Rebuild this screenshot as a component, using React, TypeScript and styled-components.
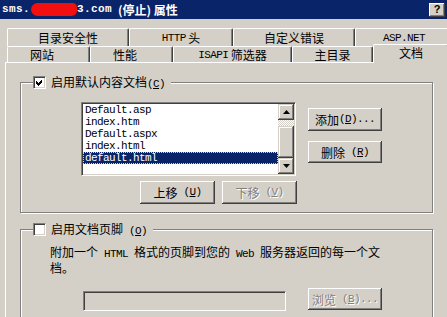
import styled, { createGlobalStyle } from 'styled-components';

const GlobalStyle = createGlobalStyle`
  html, body {
    margin: 0;
    padding: 0;
    background: #d4d0c8;
  }
  body {
    font-family: "Noto Sans CJK SC", "Noto Sans", sans-serif;
    font-size: 12px;
    color: #000;
  }
  * {
    box-sizing: border-box;
  }
`;

const Window = styled.div`
  width: 447px;
  height: 317px;
  overflow: hidden;
  display: flex;
  flex-direction: column;
  background: #d4d0c8;
`;

const TitleBar = styled.div`
  flex: 0 0 19px;
  display: flex;
  align-items: center;
  justify-content: space-between;
  padding: 0 2px;
  background: #0a246a;
  color: #fff;
  font-weight: bold;
  font-size: 12px;
  line-height: 19px;
  white-space: nowrap;
`;

const TitleText = styled.div`
  display: flex;
  align-items: center;
`;

const TitleMono = styled.span`
  font-family: "Liberation Mono", monospace;
  font-size: 11px;
  font-weight: bold;
  letter-spacing: 0.4px;
`;

const TitleState = styled.span`
  margin-left: 6px;
`;

const Redaction = styled.span`
  display: inline-block;
  width: 46px;
  height: 13px;
  margin-left: 1px;
  background: #f20f0f;
  border-radius: 7px 5px 6px 7px;
`;

const HelpButton = styled.span`
  width: 16px;
  height: 14px;
  display: flex;
  align-items: center;
  justify-content: center;
  background: #d4d0c8;
  color: #000;
  font-family: "Liberation Sans", sans-serif;
  font-weight: bold;
  font-size: 11px;
  box-shadow: inset -1px -1px #404040, inset 1px 1px #fff, inset -2px -2px #808080;
`;

const Body = styled.div`
  flex: 1;
  min-height: 0;
  display: flex;
  flex-direction: column;
  padding: 9px 0 0 5px;
`;

const TabRow = styled.div<{ $h: number }>`
  display: flex;
  align-items: flex-start;
  height: ${p => p.$h}px;
  padding-left: 2px;
  flex-shrink: 0;
`;

const Tab = styled.div<{ $w: number; $h: number; $active?: boolean; $shift?: number }>`
  flex: 0 0 ${p => p.$w}px;
  height: ${p => (p.$active ? p.$h + 3 : p.$h)}px;
  margin-top: ${p => (p.$active ? -2 : 0)}px;
  padding: 0 ${p => p.$shift ?? 0}px ${p => (p.$active ? 2 : 0)}px 0;
  position: ${p => (p.$active ? 'relative' : 'static')};
  z-index: ${p => (p.$active ? 1 : 'auto')};
  display: flex;
  align-items: center;
  justify-content: center;
  border-top: 1px solid #fff;
  border-left: 1px solid #fff;
  border-right: 1px solid #404040;
  border-radius: 2px 2px 0 0;
  box-shadow: inset -1px 0 #808080;
  background: #d4d0c8;
  line-height: 14px;
  white-space: nowrap;
`;

const Panel = styled.div`
  flex: 1;
  width: 460px;
  display: flex;
  flex-direction: column;
  border-top: 1px solid #fff;
  border-left: 1px solid #fff;
  padding: 19px 0 0 14px;
`;

const GroupBox = styled.div<{ $h: number; $mt?: number }>`
  flex-shrink: 0;
  width: 413px;
  height: ${p => p.$h}px;
  margin-top: ${p => p.$mt ?? 0}px;
  border: 1px solid #808080;
  box-shadow: inset 1px 1px #fff, 1px 1px #fff;
`;

const Legend = styled.div`
  display: flex;
  align-items: center;
  gap: 5px;
  width: fit-content;
  height: 13px;
  margin: -7px 0 0 12px;
  padding-right: 6px;
  background: #d4d0c8;
  line-height: 13px;
  white-space: nowrap;
`;

const CheckBox = styled.span`
  flex: 0 0 13px;
  width: 13px;
  height: 13px;
  display: flex;
  align-items: center;
  justify-content: center;
  background: #fff;
  border-top: 1px solid #808080;
  border-left: 1px solid #808080;
  border-right: 1px solid #fff;
  border-bottom: 1px solid #fff;
  box-shadow: inset 1px 1px #404040, inset -1px -1px #d4d0c8;
`;

const Latin = styled.span`
  font-family: "Liberation Mono", monospace;
  font-size: 11px;
  letter-spacing: -0.6px;
`;

const Key = styled.u`
  text-underline-offset: 1px;
`;

const ListRow = styled.div`
  display: flex;
  align-items: flex-start;
  margin-top: 13px;
  padding-left: 60px;
`;

const ListBox = styled.div`
  width: 215px;
  height: 74px;
  display: flex;
  padding: 1px;
  background: #fff;
  border-top: 1px solid #808080;
  border-left: 1px solid #808080;
  border-right: 1px solid #fff;
  border-bottom: 1px solid #fff;
  box-shadow: inset 1px 1px #404040, inset -1px -1px #d4d0c8;
`;

const Items = styled.div`
  flex: 1;
  display: flex;
  flex-direction: column;
`;

const Item = styled.div<{ $selected?: boolean }>`
  height: 12px;
  padding-left: 2px;
  line-height: 12px;
  font-family: "Liberation Mono", monospace;
  font-size: 11px;
  letter-spacing: -0.6px;
  white-space: nowrap;
  background: ${p => (p.$selected ? '#0a246a' : 'transparent')};
  color: ${p => (p.$selected ? '#fff' : '#000')};
  outline: ${p => (p.$selected ? '1px dotted #d8d890' : 'none')};
  outline-offset: -1px;
`;

const ScrollBar = styled.div`
  flex: 0 0 16px;
  display: flex;
  flex-direction: column;
`;

const raised = `
  background: #d4d0c8;
  box-shadow: inset -1px -1px #404040, inset 1px 1px #d4d0c8, inset -2px -2px #808080, inset 2px 2px #fff;
`;

const ScrollArrow = styled.div`
  flex: 0 0 16px;
  display: flex;
  align-items: center;
  justify-content: center;
  ${raised}
`;

const ScrollTrack = styled.div<{ $h: number }>`
  flex: 0 0 ${p => p.$h}px;
  background: repeating-conic-gradient(#fff 0 25%, #d4d0c8 0 50%) 0 0 / 2px 2px;
`;

const ScrollThumb = styled.div<{ $h: number }>`
  flex: 0 0 ${p => p.$h}px;
  ${raised}
`;

const SideButtons = styled.div`
  display: flex;
  flex-direction: column;
  gap: 10px;
  margin-left: 12px;
  padding-top: 6px;
`;

const MoveRow = styled.div`
  display: flex;
  gap: 7px;
  margin-top: 5px;
  padding-left: 119px;
`;

const Button = styled.button<{ $w: number; $h?: number }>`
  flex-shrink: 0;
  width: ${p => p.$w}px;
  height: ${p => p.$h ?? 23}px;
  padding: 0;
  border: none;
  display: flex;
  align-items: center;
  justify-content: center;
  background: #d4d0c8;
  box-shadow: inset -1px -1px #404040, inset 1px 1px #fff, inset -2px -2px #808080, inset 2px 2px #d4d0c8;
  font-family: inherit;
  font-size: 12px;
  line-height: 13px;
  white-space: nowrap;
  color: #000;

  &:disabled {
    color: #808080;
    text-shadow: 1px 1px #fff;
  }
`;

const Description = styled.div`
  margin-top: 9px;
  padding-left: 29px;
  line-height: 13px;
  white-space: nowrap;
`;

const FileRow = styled.div`
  display: flex;
  align-items: flex-start;
  gap: 22px;
  margin-top: 14px;
  padding-left: 62px;
`;

const TextBox = styled.div`
  width: 203px;
  height: 20px;
  margin-top: 3px;
  background: #d4d0c8;
  border-top: 1px solid #808080;
  border-left: 1px solid #808080;
  border-right: 1px solid #fff;
  border-bottom: 1px solid #fff;
  box-shadow: inset 1px 1px #404040, inset -1px -1px #d4d0c8;
`;

const CheckMark = () => (
  <svg width="7" height="7" viewBox="0 0 7 7" shapeRendering="crispEdges">
    <polygon points="0,2 2,4 6,0 6,3 2,7 0,5" fill="#000" />
  </svg>
);

const Arrow = ({ down }: { down?: boolean }) => (
  <svg width="7" height="4" viewBox="0 0 7 4">
    <polygon points={down ? '0,0 7,0 3.5,4' : '0,4 7,4 3.5,0'} fill="#000" />
  </svg>
);

const topTabs = [
  { label: '目录安全性', w: 122 },
  { label: <><Latin>HTTP</Latin>&nbsp;头</>, w: 104 },
  { label: '自定义错误', w: 122 },
  { label: <Latin>ASP.NET</Latin>, w: 98 },
];

const bottomTabs = [
  { label: '网站', w: 83, shift: 13 },
  { label: '性能', w: 83, shift: 13 },
  { label: <><Latin>ISAPI</Latin>&nbsp;筛选器</>, w: 119 },
  { label: '主目录', w: 81 },
  { label: '文档', w: 76, active: true },
];

const documents = ['Default.asp', 'index.htm', 'Default.aspx', 'index.html', 'default.html'];

export default function App() {
  return (
    <>
      <GlobalStyle />
      <Window>
        <TitleBar>
          <TitleText>
            <TitleMono>sms.</TitleMono>
            <Redaction />
            <TitleMono>3.com</TitleMono>
            <TitleState>(停止) 属性</TitleState>
          </TitleText>
          <HelpButton>?</HelpButton>
        </TitleBar>
        <Body>
          <TabRow $h={18}>
            {topTabs.map((t, i) => (
              <Tab key={i} $w={t.w} $h={18}>
                {t.label}
              </Tab>
            ))}
          </TabRow>
          <TabRow $h={16}>
            {bottomTabs.map((t, i) => (
              <Tab key={i} $w={t.w} $h={16} $active={t.active} $shift={t.shift}>
                {t.label}
              </Tab>
            ))}
          </TabRow>
          <Panel>
            <GroupBox $h={131}>
              <Legend>
                <CheckBox>
                  <CheckMark />
                </CheckBox>
                <span>
                  启用默认内容文档<Latin>(<Key>C</Key>)</Latin>
                </span>
              </Legend>
              <ListRow>
                <ListBox>
                  <Items>
                    {documents.map((d, i) => (
                      <Item key={d} $selected={i === documents.length - 1}>
                        {d}
                      </Item>
                    ))}
                  </Items>
                  <ScrollBar>
                    <ScrollArrow>
                      <Arrow />
                    </ScrollArrow>
                    <ScrollTrack $h={6} />
                    <ScrollThumb $h={32} />
                    <ScrollArrow>
                      <Arrow down />
                    </ScrollArrow>
                  </ScrollBar>
                </ListBox>
                <SideButtons>
                  <Button $w={74}>
                    添加<Latin>(<Key>D</Key>)...</Latin>
                  </Button>
                  <Button $w={74} $h={22}>
                    删除<Latin>&nbsp;(<Key>R</Key>)</Latin>
                  </Button>
                </SideButtons>
              </ListRow>
              <MoveRow>
                <Button $w={75}>
                  上移<Latin>&nbsp;(<Key>U</Key>)</Latin>
                </Button>
                <Button $w={75} disabled>
                  下移<Latin>&nbsp;(<Key>V</Key>)</Latin>
                </Button>
              </MoveRow>
            </GroupBox>

            <GroupBox $h={110} $mt={16}>
              <Legend>
                <CheckBox />
                <span>
                  启用文档页脚<Latin>&nbsp;(<Key>O</Key>)</Latin>
                </span>
              </Legend>
              <Description>
                附加一个<Latin>&nbsp;HTML&nbsp;</Latin>格式的页脚到您的<Latin>&nbsp;Web&nbsp;</Latin>服务器返回的每一个文
                <br />
                档。
              </Description>
              <FileRow>
                <TextBox />
                <Button $w={74} $h={22} disabled>
                  浏览<Latin>&nbsp;(<Key>B</Key>)...</Latin>
                </Button>
              </FileRow>
            </GroupBox>
          </Panel>
        </Body>
      </Window>
    </>
  );
}
